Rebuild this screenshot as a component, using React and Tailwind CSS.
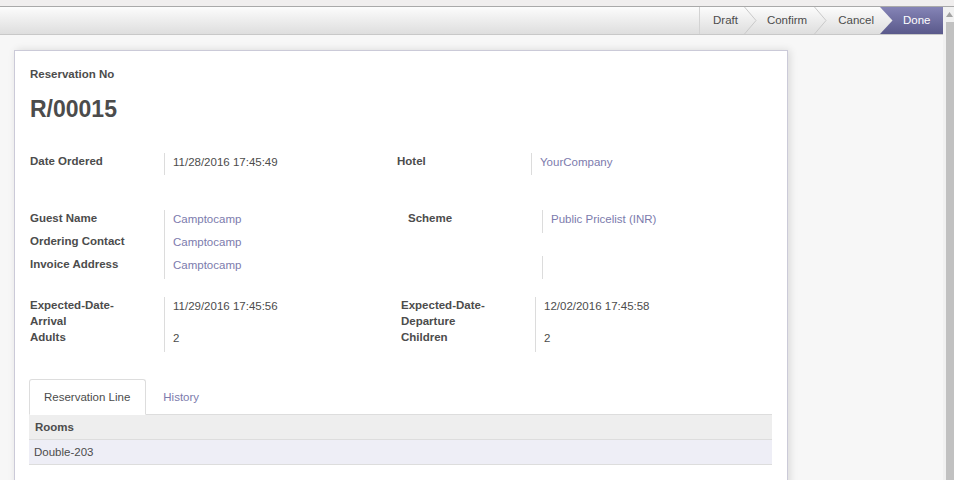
import React from 'react'

const font = { fontFamily: '"Liberation Sans", Arial, sans-serif' }

function Chevron() {
  return (
    <svg width="13" height="27" viewBox="0 0 13 27" className="shrink-0">
      <polyline points="0.5,0 12,13.5 0.5,27" fill="none" stroke="#c9c9c9" strokeWidth="1" />
    </svg>
  )
}

function StatusBar() {
  return (
    <div className="h-[28px] border-b border-[#c8c8c8] bg-gradient-to-b from-[#fcfcfc] to-[#dedede] flex justify-end">
      <div className="flex h-[27px] text-[11.5px] text-[#4c4c4c]">
        <div className="border-l border-[#d3d3d3] pl-[13px] pr-[6px] flex items-center">Draft</div>
        <Chevron />
        <div className="pl-[10px] pr-[7px] flex items-center">Confirm</div>
        <Chevron />
        <div className="pl-[11px] pr-[6px] flex items-center">Cancel</div>
        <div className="w-[63px] flex items-center bg-gradient-to-b from-[#8584b6] to-[#5a598b] text-white">
          <svg width="13" height="27" viewBox="0 0 13 27" className="shrink-0">
            <defs>
              <linearGradient id="lg" x1="0" y1="0" x2="0" y2="1">
                <stop offset="0" stopColor="#f9f9f9" />
                <stop offset="1" stopColor="#dfdfdf" />
              </linearGradient>
            </defs>
            <polygon points="0,0 12.5,13.5 0,27" fill="url(#lg)" />
          </svg>
          <span className="ml-[10px]">Done</span>
        </div>
      </div>
    </div>
  )
}

function Scrollbar() {
  return (
    <div className="w-[11px] bg-[#f1f1f1] flex flex-col">
      <div className="h-[15px] flex items-center justify-end pr-[1px]">
        <svg width="7" height="5" viewBox="0 0 7 5">
          <polygon points="0,5 3.5,0 7,5" fill="#a3a3a3" />
        </svg>
      </div>
      <div className="flex-1 ml-[3px] bg-[#c1c1c1]" />
    </div>
  )
}

function Row({ label, value, link, h = 'h-[23px]', line = true }) {
  return (
    <div className={`flex ${h}`}>
      <div className="w-[134px] font-bold leading-[16px] text-[#4c4c4c]">{label}</div>
      <div className={`flex-1 pl-[8px] pt-[1px] leading-[16px] ${line ? 'border-l border-[#dcdcdc]' : 'border-l border-transparent'} ${link ? 'text-[#7c7bad]' : 'text-[#4c4c4c]'}`}>
        {value}
      </div>
    </div>
  )
}

export default function App() {
  return (
    <div className="w-[954px] h-[480px] overflow-hidden bg-white text-[11.5px]" style={font}>
      <div className="h-[7px] bg-[#f0eeee] border-b border-[#a9a9a9]" />
      <div className="flex h-[473px]">
        <div className="flex-1 flex flex-col min-w-0">
          <StatusBar />
          <div className="flex-1 bg-[#f7f7f7] pt-[15px] pl-[14px] overflow-hidden">
            <div className="w-[774px] h-[500px] bg-white border border-[#cbcad8] shadow-[2px_0_8px_rgba(0,0,0,0.12)] pt-[15px] px-[15px]">
              <div className="font-bold leading-[16px] text-[#4c4c4c]">Reservation No</div>
              <h1 className="mt-[13px] text-[23px] leading-[28px] font-bold text-[#4c4c4c]">R/00015</h1>

              {/* groupe 1 */}
              <div className="mt-[30px] flex">
                <div className="w-[367px]">
                  <Row label="Date Ordered" value="11/28/2016 17:45:49" h="h-[22px]" />
                </div>
                <div className="flex-1">
                  <Row label="Hotel" value="YourCompany" link h="h-[22px]" />
                </div>
              </div>

              {/* groupe 2 */}
              <div className="mt-[35px] flex">
                <div className="w-[378px]">
                  <Row label="Guest Name" value="Camptocamp" link />
                  <Row label="Ordering Contact" value="Camptocamp" link />
                  <Row label="Invoice Address" value="Camptocamp" link />
                </div>
                <div className="flex-1">
                  <Row label="Scheme" value="Public Pricelist (INR)" link />
                  <Row label="" value="" line={false} />
                  <Row label="" value="" />
                </div>
              </div>

              {/* groupe 3 */}
              <div className="mt-[18px] flex">
                <div className="w-[371px]">
                  <Row label={<>Expected-Date-<br />Arrival</>} value="11/29/2016 17:45:56" h="h-[32px]" />
                  <Row label="Adults" value="2" />
                </div>
                <div className="flex-1">
                  <Row label={<>Expected-Date-<br />Departure</>} value="12/02/2016 17:45:58" h="h-[32px]" />
                  <Row label="Children" value="2" />
                </div>
              </div>

              {/* onglets */}
              <div className="-ml-px">
                <div className="mt-[27px] flex border-b border-[#dddddd] h-[36px]">
                  <div className="h-[36px] -mb-px pl-[14px] pr-[15px] pt-[2px] bg-white border border-[#dddddd] border-b-white rounded-t-[3px] flex items-center text-[#4c4c4c]">
                    Reservation Line
                  </div>
                  <div className="ml-[2px] px-[15px] pt-[2px] flex items-center text-[#7c7bad]">History</div>
                </div>
                <div className="h-[25px] pt-[2px] bg-[#eeeeee] border-b border-[#dddddd] pl-[6px] flex items-center font-bold text-[#4c4c4c]">
                  Rooms
                </div>
                <div className="h-[25px] pt-[2px] bg-[#eeeef6] border-b border-[#dddddd] pl-[5px] flex items-center text-[#4c4c4c]">
                  Double-203
                </div>
              </div>
            </div>
          </div>
        </div>
        <Scrollbar />
      </div>
    </div>
  )
}
